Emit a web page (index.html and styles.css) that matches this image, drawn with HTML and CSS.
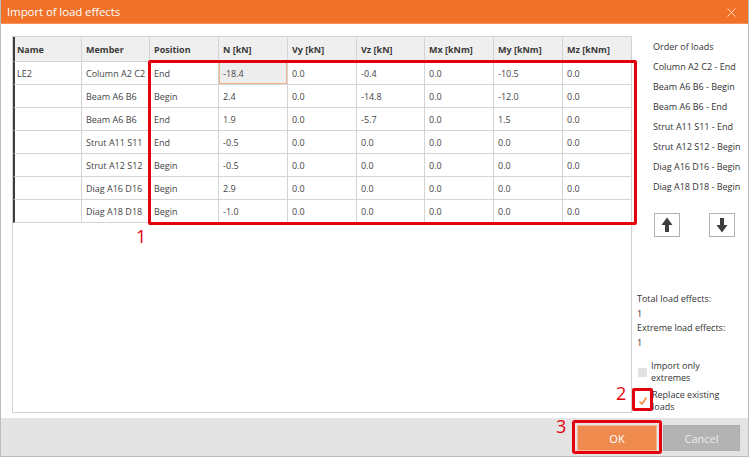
FILE: index.html
```html
<!DOCTYPE html>
<html lang="en">
<head>
<meta charset="utf-8">
<title>Import of load effects</title>
<link rel="stylesheet" href="styles.css">
</head>
<body>
<div class="window">
  <div class="titlebar">
    <span class="title">Import of load effects</span>
    <svg class="close" width="9" height="9" viewBox="0 0 9 9"><path d="M0.5 0.5 L8.5 8.5 M8.5 0.5 L0.5 8.5" stroke="#fbd2b6" stroke-width="1" fill="none"/></svg>
  </div>
  <div class="body">
    <div class="panel">
      <table class="grid">
        <colgroup>
          <col class="c69"><col class="c68"><col class="c69"><col class="c69"><col class="c69"><col class="c68"><col class="c69"><col class="c69"><col class="c68">
        </colgroup>
        <thead>
          <tr><th>Name</th><th>Member</th><th>Position</th><th>N [kN]</th><th>Vy [kN]</th><th>Vz [kN]</th><th>Mx [kNm]</th><th>My [kNm]</th><th>Mz [kNm]</th></tr>
        </thead>
        <tbody>
          <tr><td>LE2</td><td>Column A2 C2</td><td>End</td><td class="selected">-18.4</td><td>0.0</td><td>-0.4</td><td>0.0</td><td>-10.5</td><td>0.0</td></tr>
          <tr><td></td><td>Beam A6 B6</td><td>Begin</td><td>2.4</td><td>0.0</td><td>-14.8</td><td>0.0</td><td>-12.0</td><td>0.0</td></tr>
          <tr><td></td><td>Beam A6 B6</td><td>End</td><td>1.9</td><td>0.0</td><td>-5.7</td><td>0.0</td><td>1.5</td><td>0.0</td></tr>
          <tr><td></td><td>Strut A11 S11</td><td>End</td><td>-0.5</td><td>0.0</td><td>0.0</td><td>0.0</td><td>0.0</td><td>0.0</td></tr>
          <tr><td></td><td>Strut A12 S12</td><td>Begin</td><td>-0.5</td><td>0.0</td><td>0.0</td><td>0.0</td><td>0.0</td><td>0.0</td></tr>
          <tr><td></td><td>Diag A16 D16</td><td>Begin</td><td>2.9</td><td>0.0</td><td>0.0</td><td>0.0</td><td>0.0</td><td>0.0</td></tr>
          <tr><td></td><td>Diag A18 D18</td><td>Begin</td><td>-1.0</td><td>0.0</td><td>0.0</td><td>0.0</td><td>0.0</td><td>0.0</td></tr>
        </tbody>
      </table>
    </div>
    <aside class="side">
      <div class="order">
        <div class="order-title">Order of loads</div>
        <ul class="order-list">
          <li>Column A2 C2 - End</li>
          <li>Beam A6 B6 - Begin</li>
          <li>Beam A6 B6 - End</li>
          <li>Strut A11 S11 - End</li>
          <li>Strut A12 S12 - Begin</li>
          <li>Diag A16 D16 - Begin</li>
          <li>Diag A18 D18 - Begin</li>
        </ul>
        <div class="arrows">
          <button class="arrow-btn" type="button" aria-label="Move up">
            <svg width="12" height="16" viewBox="0 0 12 16"><path d="M6 0.5 L11.5 8 H8 V15 H4 V8 H0.5 Z" fill="#3e3e3e"/></svg>
          </button>
          <button class="arrow-btn" type="button" aria-label="Move down">
            <svg width="12" height="16" viewBox="0 0 12 16"><path d="M6 15.5 L11.5 8 H8 V1 H4 V8 H0.5 Z" fill="#3e3e3e"/></svg>
          </button>
        </div>
      </div>
      <div class="summary">
        <div class="stats">
          <div>Total load effects:</div>
          <div>1</div>
          <div>Extreme load effects:</div>
          <div>1</div>
        </div>
        <label class="check">
          <span class="box"></span>
          <span class="check-label">Import only<br>extremes</span>
        </label>
        <label class="check">
          <span class="box checked">
            <svg width="10" height="10" viewBox="0 0 10 10"><path d="M1.5 5.5 L4 8 L8.5 1.5" stroke="#f08a3c" stroke-width="1.6" fill="none"/></svg>
          </span>
          <span class="check-label">Replace existing<br>loads</span>
        </label>
      </div>
    </aside>
  </div>
  <div class="footer">
    <button class="btn ok" type="button">OK</button>
    <button class="btn cancel" type="button">Cancel</button>
  </div>

  <div class="mark mark-1"></div>
  <div class="mark-label label-1">1</div>
  <div class="mark mark-2"></div>
  <div class="mark-label label-2">2</div>
  <div class="mark mark-3"></div>
  <div class="mark-label label-3">3</div>
</div>
</body>
</html>
```

FILE: styles.css
```css
html, body {
  margin: 0;
  padding: 0;
  background: #ffffff;
}

body {
  font-family: "Open Sans", "Noto Sans", "Liberation Sans", sans-serif;
  font-size: 9px;
  color: #3a3a3a;
}

.window {
  position: relative;
  width: 749px;
  height: 457px;
  box-sizing: border-box;
  border: 1px solid #bdbdbd;
  border-top: none;
  display: flex;
  flex-direction: column;
  background: #ffffff;
  overflow: hidden;
}

.titlebar {
  height: 24px;
  margin: 0 -1px;
  background: #f07127;
  border-bottom: 1px solid #f3915a;
  box-sizing: border-box;
  display: flex;
  align-items: center;
  justify-content: space-between;
  padding: 0 13px 0 7px;
  flex: none;
}

.title {
  color: #ffffff;
  font-size: 11.5px;
  line-height: 1;
  letter-spacing: -0.1px;
}

.close {
  display: block;
  margin-top: 1px;
}

.body {
  flex: 1;
  display: flex;
  padding: 12px 0 5px 11px;
  min-height: 0;
}

.panel {
  width: 620px;
  box-sizing: border-box;
  border: 1px solid #d2d2d2;
  background: #ffffff;
  flex: none;
}

.grid {
  table-layout: fixed;
  width: 618px;
  border-collapse: separate;
  border-spacing: 0;
}

.c69 { width: 69px; }
.c68 { width: 68px; }

.grid th,
.grid td {
  box-sizing: border-box;
  border-right: 1px solid #d4d4d4;
  border-bottom: 1px solid #d4d4d4;
  padding: 0 0 0 4px;
  text-align: left;
  white-space: nowrap;
  overflow: hidden;
  vertical-align: middle;
}

.grid th:last-child,
.grid td:last-child {
  border-right: none;
}

.grid th:first-child,
.grid td:first-child {
  border-left: 2px solid #3c3c3c;
  padding-left: 2px;
}

.grid thead tr {
  height: 25px;
}

.grid th {
  background: #efefef;
  font-weight: 700;
  color: #3a3a3a;
  font-size: 9px;
}

.grid tbody tr {
  height: 23px;
}

.grid td {
  color: #444444;
}

.grid td.selected {
  background: #ededed;
  box-shadow: inset 0 0 0 1px #f3b48c;
}

.side {
  flex: 1;
  display: flex;
  flex-direction: column;
  justify-content: space-between;
  color: #333333;
}

.order {
  padding: 1px 0 0 21px;
}

.order-title,
.order-list li {
  line-height: 20px;
  white-space: nowrap;
}

.order-list {
  list-style: none;
  margin: 0;
  padding: 0;
}

.arrows {
  display: flex;
  gap: 29px;
  margin-top: 16px;
  padding-left: 1px;
}

.arrow-btn {
  width: 26px;
  height: 24px;
  box-sizing: border-box;
  border: 1.5px solid #b2b2b2;
  background: #ffffff;
  padding: 0;
  display: flex;
  align-items: center;
  justify-content: center;
}

.arrow-btn svg {
  display: block;
}

.summary {
  display: flex;
  flex-direction: column;
}

.stats {
  padding-left: 5px;
  line-height: 14.5px;
}

.check {
  display: flex;
  align-items: center;
  gap: 4px;
  padding-left: 6px;
  line-height: 12px;
  margin-top: 10px;
}

.check + .check {
  margin-top: 5px;
}

.box {
  width: 9px;
  height: 9px;
  background: #e2e2e2;
  flex: none;
  position: relative;
}

.box.checked {
  width: 10px;
  height: 10px;
  background: #ffffff;
}

.box.checked svg {
  display: block;
}

.footer {
  height: 38px;
  flex: none;
  background: #e4e4e4;
  box-sizing: border-box;
  display: flex;
  justify-content: flex-end;
  align-items: flex-start;
  gap: 6px;
  padding: 7px 8px 0 0;
}

.btn {
  height: 26px;
  font-family: "Open Sans", "Noto Sans", "Liberation Sans", sans-serif;
  font-size: 11px;
  padding: 0;
  box-sizing: border-box;
}

.btn.ok {
  width: 80px;
  background: #ef8a4f;
  border: 1px solid #f6b894;
  color: #ffffff;
}

.btn.cancel {
  width: 77px;
  background: #b3b3b3;
  border: 1px solid #adadad;
  color: #ececec;
}

/* red annotation overlays */
.mark {
  position: absolute;
  box-sizing: border-box;
  border: 3px solid #e5000d;
  border-radius: 2px;
}

.mark-1 {
  left: 147px;
  top: 60px;
  width: 489px;
  height: 165px;
}

.mark-2 {
  left: 631px;
  top: 388px;
  width: 21px;
  height: 23px;
}

.mark-3 {
  left: 571px;
  top: 420px;
  width: 90px;
  height: 34px;
  border-radius: 3px;
}

.mark-label {
  position: absolute;
  color: #e5000d;
  font-size: 18px;
  line-height: 18px;
}

.label-1 {
  left: 135px;
  top: 227px;
}

.label-2 {
  left: 615px;
  top: 384px;
}

.label-3 {
  left: 555px;
  top: 417px;
}
```
